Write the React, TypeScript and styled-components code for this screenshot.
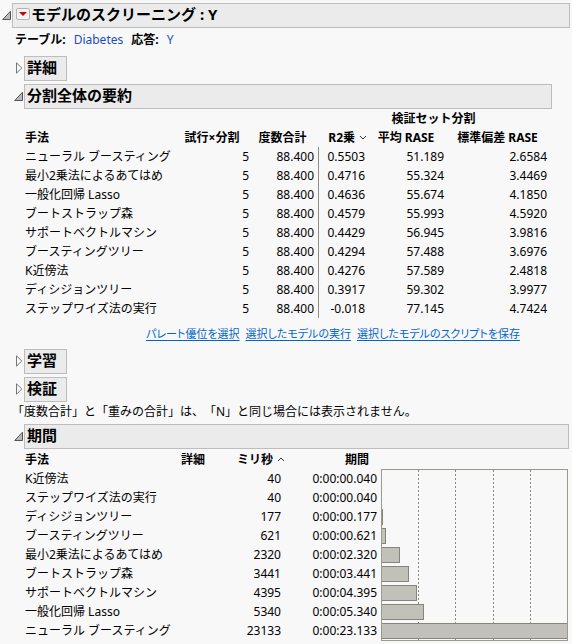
import React from "react";
import styled, { createGlobalStyle } from "styled-components";

const GlobalStyle = createGlobalStyle`
  *, *::before, *::after { box-sizing: border-box; }
  body {
    margin: 0;
    background: #f8f8f8;
    color: #000;
    font-family: "Noto Sans", "Noto Sans CJK JP", sans-serif;
    font-size: 12px;
    line-height: 19px;
  }
`;

const Report = styled.main`
  padding: 3px 2px 3px 0;
`;

const Outline = styled.section`
  display: flex;
  flex-direction: column;
`;

const OutlineBody = styled.div`
  display: flex;
  flex-direction: column;
  padding-left: 12px;
`;

const HeadingRow = styled.div<{ $inset?: number }>`
  display: flex;
  align-items: center;
  height: 25px;
  margin-right: ${(p) => p.$inset ?? 0}px;
`;

const Disclosure = styled.button`
  flex: none;
  display: flex;
  width: 12px;
  height: 25px;
  padding: 0 0 2px;
  border: 0;
  background: none;
  align-items: center;
`;

const HeadingBox = styled.div<{ $fit?: boolean }>`
  display: flex;
  align-items: center;
  gap: 1px;
  flex: ${(p) => (p.$fit ? "none" : "1")};
  height: 25px;
  padding: 0 9px 3px 2px;
  border: 1px solid #bdbdbd;
  background: #ebebeb;
`;

const Heading = styled.h2`
  margin: 0;
  font-size: 15px;
  line-height: 20px;
  font-weight: 700;
  white-space: nowrap;
`;

const MenuButton = styled.button`
  display: flex;
  align-items: center;
  justify-content: center;
  width: 14px;
  height: 12px;
  margin-left: 1px;
  padding: 0;
  border: 1px solid #b4b4b4;
  border-radius: 2px;
  background: #f4f4f4;
`;

const Source = styled.dl`
  display: flex;
  gap: 8px;
  margin: 0;
  padding: 2px 0 7px 3px;
`;

const SourceItem = styled.div`
  display: flex;
  gap: 8px;
`;

const Term = styled.dt`
  font-weight: 700;
`;

const Value = styled.dd`
  margin: 0;
  color: #1c4bbf;
`;

const Stack = styled.div`
  display: flex;
  flex-direction: column;
  gap: 3px;
`;

const Content = styled.div<{ $inset?: number; $top?: number }>`
  padding: ${(p) => p.$top ?? 0}px 0 0 12px;
  margin-right: ${(p) => p.$inset ?? 0}px;
`;

const Table = styled.table`
  width: 100%;
  table-layout: fixed;
  border-collapse: separate;
  border-spacing: 0;
  font-variant-numeric: tabular-nums;
`;

const Col = styled.col<{ $w?: number }>`
  width: ${(p) => (p.$w ? `${p.$w}px` : "auto")};
`;

const Th = styled.th<{ $align?: string; $end?: number }>`
  height: 19px;
  padding: 0 ${(p) => p.$end ?? 0}px 0 1px;
  text-align: ${(p) => p.$align ?? "center"};
  font-weight: 700;
  white-space: nowrap;
`;

const RowName = styled.th`
  height: 19px;
  padding: 0 0 0 1px;
  text-align: left;
  font-weight: 400;
  white-space: nowrap;
`;

const Num = styled.td<{ $end?: number; $rule?: boolean }>`
  height: 19px;
  padding: 0 ${(p) => p.$end ?? 0}px 0 0;
  border-left: ${(p) => (p.$rule ? "1px solid #8e8e82" : "0")};
  text-align: right;
  white-space: nowrap;
`;

const ChartCell = styled.td`
  padding: 0;
  vertical-align: top;
`;

const Chart = styled.svg`
  display: block;
  width: 100%;
  height: 172px;
  margin-bottom: -1px;
  shape-rendering: crispEdges;
`;

const SortLabel = styled.span`
  display: inline-flex;
  align-items: center;
  gap: 4px;
`;

const Actions = styled.nav`
  display: flex;
  justify-content: center;
  gap: 6px;
  padding: 6px 0 6px 90px;
  white-space: nowrap;
`;

const Action = styled.a`
  color: #0066cc;
  font-size: 11px;
  font-feature-settings: "palt";
  text-underline-offset: 2px;
`;

const Note = styled.p`
  margin: 0;
  padding-bottom: 3px;
  white-space: nowrap;
  text-spacing-trim: space-all;
`;

const OpenIcon = () => (
  <svg width="12" height="12" viewBox="0 0 12 12" aria-hidden="true">
    <path d="M10.5 2.2V10.5H2.7Z" fill="#b8b8b8" stroke="#555" />
  </svg>
);

const ClosedIcon = () => (
  <svg width="12" height="12" viewBox="0 0 12 12" aria-hidden="true">
    <path d="M4.5 0.8V11.2L9.8 6Z" fill="#fafafa" stroke="#777" />
  </svg>
);

const Caret = ({ up }: { up?: boolean }) => (
  <svg width="8" height="5" viewBox="0 0 8 5" aria-hidden="true">
    <path d={up ? "M1 4L4 1L7 4" : "M1 1L4 4L7 1"} fill="none" stroke="#333" />
  </svg>
);

type SectionHeadingProps = { title: string; open?: boolean; inset?: number };

const SectionHeading = ({ title, open, inset }: SectionHeadingProps) => (
  <HeadingRow $inset={inset}>
    <Disclosure type="button" aria-expanded={!!open} aria-label={title}>
      {open ? <OpenIcon /> : <ClosedIcon />}
    </Disclosure>
    <HeadingBox $fit={!open}>
      <Heading>{title}</Heading>
    </HeadingBox>
  </HeadingRow>
);

const summary = [
  ["ニューラル ブースティング", "5", "88.400", "0.5503", "51.189", "2.6584"],
  ["最小2乗法によるあてはめ", "5", "88.400", "0.4716", "55.324", "3.4469"],
  ["一般化回帰 Lasso", "5", "88.400", "0.4636", "55.674", "4.1850"],
  ["ブートストラップ森", "5", "88.400", "0.4579", "55.993", "4.5920"],
  ["サポートベクトルマシン", "5", "88.400", "0.4429", "56.945", "3.9816"],
  ["ブースティングツリー", "5", "88.400", "0.4294", "57.488", "3.6976"],
  ["K近傍法", "5", "88.400", "0.4276", "57.589", "2.4818"],
  ["ディシジョンツリー", "5", "88.400", "0.3917", "59.302", "3.9977"],
  ["ステップワイズ法の実行", "5", "88.400", "-0.018", "77.145", "4.7424"],
];

const durations: [string, number, string][] = [
  ["K近傍法", 40, "0:00:00.040"],
  ["ステップワイズ法の実行", 40, "0:00:00.040"],
  ["ディシジョンツリー", 177, "0:00:00.177"],
  ["ブースティングツリー", 621, "0:00:00.621"],
  ["最小2乗法によるあてはめ", 2320, "0:00:02.320"],
  ["ブートストラップ森", 3441, "0:00:03.441"],
  ["サポートベクトルマシン", 4395, "0:00:04.395"],
  ["一般化回帰 Lasso", 5340, "0:00:05.340"],
  ["ニューラル ブースティング", 23133, "0:00:23.133"],
];

const longest = 23133;
const barWidth = (ms: number) => `${Math.max((ms / longest) * 100, 1)}%`;

const DurationChart = () => (
  <Chart role="img" aria-label="期間">
    <rect width="100%" height="172" fill="#9a9a8f" />
    <rect y="1" width="100%" height="170" fill="#f8f8f8" />
    {["20%", "40%", "60%", "80%"].map((x) => (
      <line key={x} x1={x} x2={x} y1="1" y2="171" stroke="#85857a" strokeDasharray="2 2" />
    ))}
    {durations.map(([name, ms], i) =>
      ms < 100 ? null : (
        <g key={name}>
          <rect y={2 + i * 19} width={barWidth(ms)} height="16" fill="#85857a" />
          <svg y={3 + i * 19} width={barWidth(ms)} height="14">
            <rect x="-1" width="100%" height="14" fill="#c2c1b9" />
          </svg>
        </g>
      )
    )}
    <line x1="0" x2="0" y1="0" y2="172" stroke="#9a9a8f" strokeWidth="2" />
    <line x1="100%" x2="100%" y1="0" y2="172" stroke="#9a9a8f" strokeWidth="2" />
  </Chart>
);

export default function App() {
  return (
    <>
      <GlobalStyle />
      <Report>
        <Outline>
          <HeadingRow>
            <Disclosure type="button" aria-expanded aria-label="モデルのスクリーニング">
              <OpenIcon />
            </Disclosure>
            <HeadingBox>
              <MenuButton type="button" aria-label="メニュー">
                <svg width="8" height="4" viewBox="0 0 8 4" aria-hidden="true">
                  <path d="M0 0H8L4 4Z" fill="#d00000" />
                </svg>
              </MenuButton>
              <Heading as="h1">モデルのスクリーニング : Y</Heading>
            </HeadingBox>
          </HeadingRow>
          <OutlineBody>
            <Source>
              <SourceItem>
                <Term>テーブル:</Term>
                <Value>Diabetes</Value>
              </SourceItem>
              <SourceItem>
                <Term>応答:</Term>
                <Value>Y</Value>
              </SourceItem>
            </Source>
            <Stack>
              <SectionHeading title="詳細" />
              <SectionHeading title="分割全体の要約" open inset={18} />
            </Stack>
            <Content $inset={18}>
              <Table>
                <colgroup>
                  <Col $w={149} />
                  <Col $w={77} />
                  <Col $w={68} />
                  <Col $w={49} />
                  <Col $w={80} />
                  <Col />
                </colgroup>
                <thead>
                  <tr>
                    <Th as="td" colSpan={3} />
                    <Th colSpan={3} $end={4} scope="colgroup">検証セット分割</Th>
                  </tr>
                  <tr>
                    <Th $align="left" scope="col">手法</Th>
                    <Th scope="col">試行×分割</Th>
                    <Th $end={4} scope="col">度数合計</Th>
                    <Th $align="right" scope="col" aria-sort="descending">
                      <SortLabel>R2乗<Caret /></SortLabel>
                    </Th>
                    <Th $end={3} scope="col">平均 RASE</Th>
                    <Th $end={5} scope="col">標準偏差 RASE</Th>
                  </tr>
                </thead>
                <tbody>
                  {summary.map(([name, trials, freq, r2, mean, sd]) => (
                    <tr key={name}>
                      <RowName scope="row">{name}</RowName>
                      <Num $end={1}>{trials}</Num>
                      <Num $end={4}>{freq}</Num>
                      <Num $end={2} $rule>{r2}</Num>
                      <Num $end={3}>{mean}</Num>
                      <Num $end={5}>{sd}</Num>
                    </tr>
                  ))}
                </tbody>
              </Table>
              <Actions>
                <Action href="#pareto">パレート優位を選択</Action>
                <Action href="#run">選択したモデルの実行</Action>
                <Action href="#save">選択したモデルのスクリプトを保存</Action>
              </Actions>
            </Content>
            <Stack>
              <SectionHeading title="学習" />
              <SectionHeading title="検証" />
            </Stack>
            <Note>「度数合計」と「重みの合計」は、「N」と同じ場合には表示されません。</Note>
            <SectionHeading title="期間" open inset={1} />
            <Content $inset={2} $top={1}>
              <Table>
                <colgroup>
                  <Col $w={149} />
                  <Col $w={39} />
                  <Col $w={73} />
                  <Col $w={96} />
                  <Col />
                </colgroup>
                <thead>
                  <tr>
                    <Th $align="left" scope="col">手法</Th>
                    <Th scope="col">詳細</Th>
                    <Th $align="right" scope="col" aria-sort="ascending">
                      <SortLabel>ミリ秒<Caret up /></SortLabel>
                    </Th>
                    <Th $align="right" $end={12} scope="col">期間</Th>
                    <Th as="td" />
                  </tr>
                </thead>
                <tbody>
                  {durations.map(([name, ms, time], i) => (
                    <tr key={name}>
                      <RowName scope="row">{name}</RowName>
                      <Num />
                      <Num $end={4}>{ms}</Num>
                      <Num $end={4}>{time}</Num>
                      {i === 0 && (
                        <ChartCell rowSpan={durations.length}>
                          <DurationChart />
                        </ChartCell>
                      )}
                    </tr>
                  ))}
                </tbody>
              </Table>
            </Content>
          </OutlineBody>
        </Outline>
      </Report>
    </>
  );
}
